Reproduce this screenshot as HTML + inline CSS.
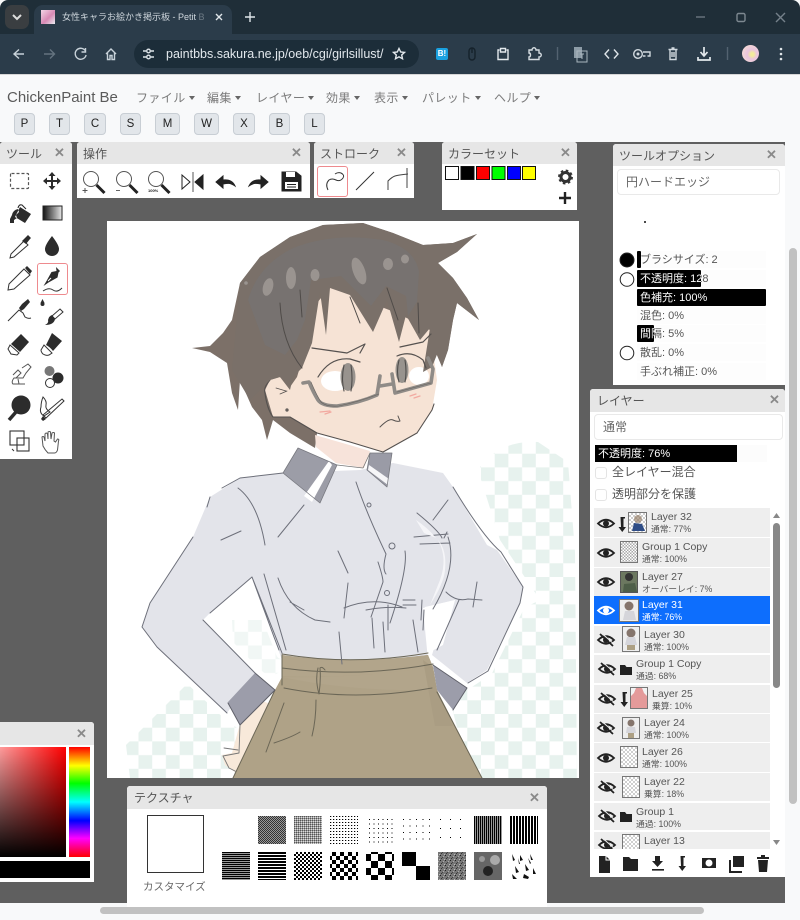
<!DOCTYPE html>
<html lang="ja"><head><meta charset="utf-8"><title>ChickenPaint</title>
<style>
html,body{margin:0;padding:0;width:800px;height:920px;overflow:hidden;background:#f8f9fa}
body{position:relative;font-family:"Liberation Sans","Noto Sans CJK JP",sans-serif;color:#555}
.a,.t{position:absolute}
.t{white-space:nowrap;line-height:1}
svg{position:absolute;left:0;top:0;overflow:visible}
.p{position:absolute;background:#fff;border-radius:3px 3px 0 0}
.h{position:absolute;left:0;right:0;top:0;height:22px;background:#e6e6e6;border-radius:3px 3px 0 0}
.h b{position:absolute;left:6px;top:5px;font-weight:400;font-size:12px;line-height:14px;color:#555;white-space:nowrap}
.m{font-size:12px;color:#7b7b7b;top:92px;letter-spacing:.4px}
.m:after{content:"";display:inline-block;margin-left:3px;vertical-align:2px;border:3.5px solid transparent;border-top:4px solid #666;border-bottom:0}
.k{position:absolute;top:113px;height:20px;background:#e2e6ea;border:1px solid #c8ced4;border-radius:4px;text-align:center;font-size:11.5px;line-height:20px;color:#222}
.x{position:absolute;font-size:13px;font-weight:700;color:#8a8a8a;line-height:14px}
.s{position:absolute;left:637px;width:129px;height:17px;font-size:11px;line-height:19px;color:#555;background:#fdfdfd}
.s i{position:absolute;left:0;top:0;bottom:0;background:#000;overflow:hidden;border-radius:1px;font-style:normal;color:#fff;white-space:nowrap}
.s span{position:absolute;left:3px;white-space:nowrap}
.r{position:absolute;left:594px;width:176px;background:#eee;overflow:hidden}
.n{position:absolute;font-size:10.5px;line-height:11px;color:#555;white-space:nowrap;top:4px}
.u{position:absolute;font-size:8.8px;line-height:10px;color:#555;white-space:nowrap;top:16px}
.c{position:absolute;width:16px;height:20px;border:1px solid #777;background:repeating-conic-gradient(#cfcfcf 0 25%,#fff 0 50%) 0 0/4px 4px;overflow:hidden}
.sel .n,.sel .u{color:#fff}
.cb{position:absolute;left:595px;width:10px;height:10px;border:1px solid #e4e4e4;border-radius:3px;background:#fff}
</style></head><body>

<!-- browser chrome -->
<div class="a" style="left:0;top:0;width:800px;height:34px;background:#1f2e38;border-radius:8px 8px 0 0"></div>
<div class="a" style="left:0;top:34px;width:800px;height:40px;background:#2b3c4a"></div>
<div class="a" style="left:5px;top:5px;width:24px;height:24px;background:#3a3e41;border-radius:7px"></div>
<div class="a" style="left:34px;top:5px;width:198px;height:30px;background:#2b3c4a;border-radius:9px 9px 0 0"></div>
<div class="a" style="left:41px;top:10px;width:14px;height:14px;background:linear-gradient(135deg,#f3d6e6,#d98ab5 55%,#e9ecf0)"></div>
<div class="t" style="left:62px;top:12px;width:142px;overflow:hidden;font-size:9px;color:#ced6dc;line-height:11px">女性キャラお絵かき掲示板 - Petit <span style="opacity:.4">B</span></div>
<div class="a" style="left:134px;top:40px;width:285px;height:28px;background:#1c2d39;border-radius:14px"></div>
<div class="t" style="left:166px;top:48px;font-size:12.5px;color:#e2e8ed">paintbbs.sakura.ne.jp/oeb/cgi/girlsillust/</div>
<div class="a" style="left:436px;top:48px;width:12px;height:12px;background:#1aa1e0;border-radius:2px;color:#fff;font-size:8px;font-weight:700;line-height:12px;text-align:center">B!</div>
<div class="a" style="left:742px;top:45px;width:17px;height:17px;border-radius:50%;background:radial-gradient(circle at 60% 55%,#f1ea9c 0 12%,#e9c4de 35%,#f2d6d6 70%,#d8c8e8)"></div>
<svg width="800" height="920" fill="none" stroke="#c8d2d9" stroke-width="1.4">
<path d="M13 15l4 4 4-4" stroke="#ddd" stroke-width="2"/>
<path d="M216 14l6 6M222 14l-6 6" stroke="#dfe5e9"/>
<path d="M245 17h10M250 12v10" stroke="#dfe5e9"/>
<path d="M696 17h9" stroke="#6b7780"/><rect x="737" y="13.500" width="8" height="8" rx="1.500" stroke="#7d8890"/><path d="M776 13l9 9M785 13l-9 9" stroke="#75818a"/>
<path d="M24 54H14M19 49.500l-5 4.500 5 4.500"/>
<path d="M44 54h10M50 49.500l4.500 4.500-4.500 4.500" stroke="#64737f"/>
<path d="M85.500 51a5.500 5.500 0 1 0 .6 4M85.500 48v4H81.500"/>
<path d="M106 54l5-5 5 5M107.500 53v6.500h2.500v-4h2v4h2.500V53"/>
<path d="M143 51h3M151 51h3M143 57h3M151 57h3" stroke="#dce3e8"/><circle cx="148.500" cy="51" r="1.800" stroke="#dce3e8"/><circle cx="148.500" cy="57" r="1.800" stroke="#dce3e8"/>
<path d="M399 48.500l1.700 3.500 3.800.4-2.800 2.600.8 3.800-3.500-2-3.500 2 .8-3.800-2.800-2.600 3.800-.4z" stroke="#e4e9ed"/>
<path d="M469 51a3 3 0 0 1 6 0v6a3 3 0 0 1-6 0zM472 48v5" stroke="#15222b"/>
<path d="M499.500 50h-1.500v9.500h10V50h-1.500M500.500 48.500h5V52h-5z" stroke="#e4e9ed"/>
<path d="M529 50h3c0-3 4-3 4 0h3v3c3 0 3 4 0 4v2.500h-10v-2.500c2 0 2-4 0-4z" stroke="#d6dde2"/>
<path d="M557.500 47v13M727.500 47v13" stroke="#536270"/>
<rect x="574" y="47" width="8" height="11" fill="#8d9ca7" stroke="none"/><path d="M577 51h10v11h-10z" stroke="#aab6bf" stroke-width="1"/><path d="M580 54h4M582 54v5" stroke="#aab6bf" stroke-width="1"/>
<path d="M609 49.500l-4 4.500 4 4.500M614 49.500l4 4.500-4 4.500" stroke="#dfe5e9"/>
<circle cx="638" cy="54" r="4.300" stroke="#d1d9df"/><circle cx="638" cy="54" r="1.500" fill="#d1d9df" stroke="none"/><path d="M643 52h7v4h-2.500M643 56h2.500" stroke="#d1d9df"/>
<path d="M668.500 49.500h9M670 49.500v10h6v-10M671.500 48h3M672 52v5M674 52v5" stroke="#d1d9df"/>
<path d="M704 47v8M700.500 52l3.500 4 3.500-4M698 57v3h12v-3" stroke="#e4e9ed" stroke-width="1.700"/>
<circle cx="781" cy="49" r="1.300" fill="#dfe5e9" stroke="none"/><circle cx="781" cy="54" r="1.300" fill="#dfe5e9" stroke="none"/><circle cx="781" cy="59" r="1.300" fill="#dfe5e9" stroke="none"/>
</svg>

<!-- page header -->
<div class="a" style="left:0;top:74px;width:800px;height:68px;background:#f8f9fa;border-top:1px solid #d6d6d6;box-sizing:border-box"></div>
<div class="t" style="left:7px;top:90px;font-size:15px;color:#5a5a5a">ChickenPaint Be</div>
<div class="t m" style="left:136px">ファイル</div><div class="t m" style="left:207px">編集</div><div class="t m" style="left:256px">レイヤー</div><div class="t m" style="left:326px">効果</div><div class="t m" style="left:374px">表示</div><div class="t m" style="left:422px">パレット</div><div class="t m" style="left:494px">ヘルプ</div>
<div class="k" style="left:14px;width:19px">P</div><div class="k" style="left:49px;width:19px">T</div><div class="k" style="left:84px;width:20px">C</div><div class="k" style="left:120px;width:19px">S</div><div class="k" style="left:155px;width:23px">M</div><div class="k" style="left:194px;width:23px">W</div><div class="k" style="left:233px;width:20px">X</div><div class="k" style="left:269px;width:19px">B</div><div class="k" style="left:304px;width:19px">L</div>

<!-- workspace -->
<div class="a" style="left:0;top:142px;width:785px;height:761px;background:#5f5f5f"></div>
<div class="a" style="left:107px;top:221px;width:472px;height:557px;background:#fff"></div>

<!-- illustration -->
<svg width="800" height="920" stroke-linejoin="round" stroke-linecap="round">
<defs>
<pattern id="ck" x="481" y="440" width="27.400" height="27.400" patternUnits="userSpaceOnUse"><rect width="13.700" height="13.700" fill="#e7f2ee"/><rect x="13.700" y="13.700" width="13.700" height="13.700" fill="#e7f2ee"/></pattern>
<clipPath id="cv"><rect x="107" y="221" width="472" height="557"/></clipPath>
<filter id="sf" x="0" y="0" width="100%" height="100%"><feGaussianBlur stdDeviation=".35"/></filter>
</defs>
<g clip-path="url(#cv)"><g filter="url(#sf)">
<path d="M478 470q20-30 60-28l30 20 7 90 2 226H470L450 700 500 620 540 600 500 540z" fill="url(#ck)"/>
<path d="M126 745l60-60 50-5 20 98H130z" fill="url(#ck)"/>
<path d="M232 620l40 0 12 50-20 10-30-20z" fill="url(#ck)" opacity=".6"/>
<!-- halo -->
<path d="M283 473L240 478 210 497 193 537 150 603 142 627 157 647 227 713 243 725 275 690 255 673 203 620 210 613 252 577 282 653H428L423 608 438 610 430 650 433 665 467 683 487 670 520 603 523 587 497 550 487 545 453 487 443 473 393 463z" fill="#fff" stroke="#fff" stroke-width="12"/>
<!-- hand -->
<path d="M240 724l18-24 10 3-25 75-18-13-3-10 10-2z" fill="#f8e9da"/>
<path d="M240 725l-1 28-16 3 6 12 10 5M224 748l14 2" fill="none" stroke="#777" stroke-width=".9"/>
<!-- shirt -->
<path d="M283 473L240 478 210 497 193 537 150 603 142 627 157 647 227 713 255 673 203 620 210 613 252 577 282 660H428L423 608 455 600 445 612 432 655 467 683 487 670 520 603 523 587 497 550 487 545 453 487 443 473 393 463 360 470z" fill="#e3e4ea"/>
<path d="M425 607l30-7-12 45-15 8z" fill="#fff"/>
<!-- skirt -->
<path d="M282 655q60 10 146 0l5 12 4 23 45 88H233l42-88 7-13z" fill="#afa287"/>
<path d="M282 655q70 10 146 0l5 12q-80 12-151 9zM282 677q70 15 155 13l-4-23q-80 12-151 10z" fill="#b2a58b"/>
<path d="M423 660l10 7 4 23 16 36-18 0z" fill="#aa9d83"/>
<g fill="none" stroke="#6b6656" stroke-width="1"><path d="M282 654q70 12 146-1M282 668q75 10 151-4M284 688q70 14 148 0M282 655v30M275 690l-42 88M437 692l45 86M318 668q-3 12 1 26 2-14 1-26 2-2 5 2M316 700q0 20-4 36M284 703l-18 49M274 743q18-6 26-11" /></g>
<!-- cuffs -->
<path d="M228 702l27-29 20 17-35 35zM433 665l34 23-14 22-16-20z" fill="#9c9daa"/>
<g fill="none" stroke="#5f6069" stroke-width="1"><path d="M228 703l12 22 35-35-20-17M433 665l34 23-14 22"/></g>
<!-- shirt lines -->
<g fill="none" stroke="#6d6f7a" stroke-width="1"><path d="M283 473L240 478 222 488M210 497l-3 10M193 537l-43 66-8 24 15 20 70 66M203 620l52 53M210 613l42-36 30 76M252 577l22 60 5 13M264 574l22 76"/><path d="M238 488q20 15 27 57M241 531l-20 9M304 505l-26 32"/><path d="M356 482q10 30 30 72-4 15 0 20M378 562q5 15 5 20l-12 35"/><circle cx="369" cy="505" r="2"/><circle cx="392" cy="546" r="3"/><circle cx="387" cy="593" r="2.500"/><path d="M405 551q3 18-15 72M338 551l10 22M348 583l-4 35"/><path d="M278 578q10 30 37 42l15 2M290 602l14 8M344 608q30-12 58-1M366 610q20-4 40-2M403 600h12M403 605h13M388 605v25M372 618l2 30M383 622l2 30M339 632l3 32M413 620l5 32M422 600l-1 20"/><path d="M417 513q22 18 25 25M414 537l34-3M420 544l30-1M448 537q10 30-15 72M447 532l-3 6M448 500l-15 20M453 487q30 50 48 65l22 35-3 16-32 68-20 12M477 582l-4 25M446 592q10 10 22 7l14 1M459 600l-22 50M424 610l-1 20"/></g>
<path d="M438 540q10 18 2 40l-10 25q14-22 15-35 2-20-7-30zM416 520q12 8 20 18l-12-5z" fill="#f5f5f8"/>
<!-- back hair -->
<path d="M192 348L210 346 223 333 232 320 240 283 260 257 290 237 323 225 363 223 393 233 423 245 453 243 477 234 457 252 438 263 453 278 467 298 479 320 457 303 453 320 448 350 442 367 436 353 420 370 380 420 317 433 315 448 290 433 273 420 267 440 262 420 252 407 240 380 238 410 232 393 227 363 210 352z" fill="#7b6f68"/>
<!-- neck -->
<path d="M315 435l55 16-6 17-28-5-20-16z" fill="#f7e3da"/>
<!-- collar -->
<path d="M298 448l39 17-17 38-37-30z" fill="#9c9da7"/>
<path d="M329 461l-25 35 8 6 20-37z" fill="#fff"/>
<path d="M370 453h22l-5 34-20-17z" fill="#9a9ba6"/><path d="M369 465l20 14-1 6-20-15z" fill="#f6f6f8"/>
<path d="M298 448l39 17-17 38-37-30zM370 453h22l-5 34-20-17z" fill="none" stroke="#77787f" stroke-width=".8"/>
<path d="M337 465l26 3 7-15" fill="none" stroke="#777" stroke-width=".8"/>
<!-- face -->
<path d="M300 367L303 320 330 287 397 313 430 330 437 380 432 410 417 433 383 452 350 442 317 433 290 417 273 417 265 390 270 380 280 377 290 387 297 377z" fill="#f6e3d5"/>
<path d="M270 380q-7 8-5 13 2 16 8 24h17l27 16 33 9 33 10 34-19 15-23 2-6" fill="none" stroke="#55514f" stroke-width="1.100"/>
<!-- eye whites -->
<ellipse cx="335" cy="381" rx="14" ry="10" fill="#fff"/><ellipse cx="419" cy="376" rx="10" ry="9" fill="#fff"/>
<!-- front hair -->
<path d="M240 283L260 257 290 237 323 225 363 223 393 233 423 245 453 243 477 234 457 252 438 263 453 278 467 298 479 320 457 303 453 320 448 350 442 367 438 352 432 367 423 372 430 328 420 340 406 315 399 342 387 300 373 332 350 295 330 288 326 335 320 292 312 343 302 368 293 377 290 390 280 377 270 380 250 400 232 370z" fill="#7a7069"/>
<path d="M248 300q10-35 45-52 40-16 90-8 32 8 36 32l-2 30-9 14-2-20-20-10-15 20-30-30-30 4-6 40-8 20-12 15-20-10z" fill="#77726f"/>
<g fill="#9a9490"><ellipse cx="268" cy="287" rx="5" ry="9" transform="rotate(15 268 287)"/><ellipse cx="291" cy="278" rx="5" ry="11"/><ellipse cx="315" cy="275" rx="4.500" ry="6"/><ellipse cx="359" cy="271" rx="6" ry="14" transform="rotate(-20 359 271)"/><ellipse cx="388" cy="264" rx="5" ry="6"/><ellipse cx="405" cy="259" rx="4" ry="4.500"/><circle cx="246" cy="283" r="1.800"/></g>
<g fill="none" stroke="#4f4b48" stroke-width="1"><path d="M280 303q2 40 22 65M300 290l2 27M350 297l10 26M387 288l11 32M418 303l1 30"/></g>
<!-- eyes -->
<ellipse cx="348" cy="377" rx="7.500" ry="14" fill="#98938e"/><ellipse cx="402" cy="370" rx="6.500" ry="13" fill="#98938e"/>
<g fill="none" stroke="#4f4d4c" stroke-width="1.100"><path d="M344 365q-3 14 0 26M351 365q2 14 0 26M399 360q-3 12 0 22M405 360q2 12 0 22"/></g>
<g fill="none" stroke="#55514f" stroke-width="1.200"><path d="M312 348l35 5 18-9-5 9M400 347l23-5 8-8"/><path d="M318 377q12-20 32-18l10 3M397 356q14-6 26 4l3 8"/><path d="M380 427q9-9 13-7 4 2 7 1l-2-5" stroke-width="1"/><path d="M276 388l10 3M280 394l7-3" stroke-width=".8"/><circle cx="287" cy="410" r="1"/></g>
<!-- glasses -->
<g fill="none" stroke="#8f8b87" stroke-width="3.600"><path d="M303 383l6-1q4 10 9 18 4 6 19 6 22-3 40-11l3-19"/><path d="M380 386l12-2M392 374l3 19 36-10 2-14-5-11"/></g>
<g fill="none" stroke="#66625f" stroke-width=".6"><path d="M311 382q6 14 10 20 5 5 18 4 22-5 40-12M397 392l34-9"/></g>
<path d="M320 412l10-1M325 414l6-2M410 396l6-2M414 398l6-2" stroke="#f2a9a0" stroke-width="1.200" fill="none"/>
</g></g>
</svg>

<!-- right page scrollbar + bottom -->
<div class="a" style="left:789px;top:248px;width:8px;height:556px;background:#c1c1c1;border-radius:4px"></div>
<div class="a" style="left:100px;top:907px;width:604px;height:7px;background:#c1c1c1;border-radius:4px"></div>

<!-- Tools panel -->
<div class="p" style="left:0;top:142px;width:72px;height:317px"><div class="h"><b>ツール</b></div></div>
<div class="x" style="left:54px;top:146px">✕</div>
<div class="a" style="left:37px;top:263px;width:29px;height:30px;border:1px solid #ee8a8e;border-radius:3px"></div>
<svg width="800" height="920" fill="#2c2c2c" stroke="none">
<rect x="10.500" y="173.500" width="18" height="15" rx="1" fill="none" stroke="#555" stroke-width="1.200" stroke-dasharray="3 2"/>
<path d="M52 172l3.500 4h-2.500v4h4v-2.500l4 3.500-4 3.500V182h-4v4h2.500L52 190l-3.500-4H51v-4h-4v2.500L43 181l4-3.500V180h4v-4h-2.500z"/>
<path d="M20 207l11 7-6 9-10-6zM18 209q-5 1-6 6l-2 4v4h4v-3l3-2-1-3 3-3z"/><path d="M18 208q1-4 4-3l4 4" fill="none" stroke="#2c2c2c" stroke-width="1.100"/>
<defs><linearGradient id="gr"><stop offset="0" stop-color="#111"/><stop offset="1" stop-color="#e8e8e8"/></linearGradient></defs>
<rect x="43" y="206" width="19" height="14" fill="url(#gr)" stroke="#222"/>
<path d="M24 241l4 4-14 12-4 1 1-4z" fill="#fff" stroke="#333" stroke-width="1"/><path d="M22 241l5-5 1-1 3 3-1 1-4 5z"/>
<path d="M52 236q7 9 7 13a7 7 0 0 1-14 0q0-4 7-13z"/>
<path d="M24 269l6 6-16 14-6 1 1-6z" fill="#fff" stroke="#333" stroke-width="1"/><path d="M25 268l2-2 5 5-2 3z"/>
<path d="M56 267l4 4-1.500 1.500-1 5-9 5-5 3.500 3-5 5-9 5-1z"/><path d="M48 281l3-3" stroke="#fff" fill="none"/><path d="M43 291q6-4 10-1t9-2" fill="none" stroke="#333" stroke-width="1"/>
<path d="M8 321l11-11 4 3 2 4q3 2 6 1" fill="none" stroke="#333" stroke-width="1"/><path d="M22 304l6-5 2 3-6 7-3 2-2-3z"/>
<circle cx="42.500" cy="304" r="2"/><path d="M42.500 299l2 4h-4z"/><path d="M60 309l3 3-8 7-3-3z" fill="#fff" stroke="#333"/><path d="M52 315l3 4q-1 6-10 6 4-2 3-5 1-4 4-5z"/>
<path d="M21 334l8 8-9 10-9-8z"/><path d="M10 345l9 8-2 2-6-1-3-5z" fill="#fff" stroke="#333"/>
<path d="M52 333l10 8-9 10q-3-4-7-6z"/><path d="M44 345l8 8-3 2q-3 1-6-1-2-2-2-4z" fill="#fff" stroke="#333"/>
<path d="M22 368l6-4 3 3-5 6-3 5-9 0q-3 4-1 6h12M13 375l5-5 3 3-5 5M18 379l1 5" fill="none" stroke="#555" stroke-width="1"/>
<circle cx="49.500" cy="371" r="5" fill="#777"/><circle cx="58" cy="378" r="5.500"/><circle cx="50" cy="383" r="4.500" fill="#fff" stroke="#333"/>
<circle cx="21" cy="405" r="9.500"/><path d="M16 412l-7 8" stroke="#2c2c2c" stroke-width="3.500"/>
<path d="M62 399l2 2-18 17-3-3z" fill="#fff" stroke="#333"/><path d="M43 416l3 3-3 2-2-2z"/><path d="M43 397q4 4 3 8t4 7l-6 4q-5-3-3-9 0-5 2-10z" fill="none" stroke="#333"/>
<rect x="10" y="431" width="14" height="14" fill="none" stroke="#333" stroke-width="1.100"/><rect x="17" y="438" width="12" height="13" fill="none" stroke="#333" stroke-width="1.100"/><path d="M12 449l2 2" stroke="#333"/>
<path d="M48 453q-3-3-5-7l-1-9q1-1 2 0l1 4v-7q1-2 2.500 0l.5 5v-7q1.500-1 2.500 0l.5 7 1-6q1.500-1 2.500 0l-.5 8 1.500 1 2-3q2 0 1 2l-1 9q-1 3-3 3z" fill="#fff" stroke="#555"/>
</svg>

<!-- Ops panel -->
<div class="p" style="left:77px;top:142px;width:233px;height:56px"><div class="h"><b>操作</b></div></div>
<div class="x" style="left:291px;top:146px">✕</div>
<div class="t" style="left:148px;top:189px;font-size:4px;font-weight:700;color:#222">100%</div>
<svg width="800" height="920" fill="none" stroke="#555" stroke-width="1">
<circle cx="91" cy="179" r="7.500"/><path d="M96.500 185l8 8" stroke="#222" stroke-width="3"/>
<path d="M85 188v5M82.500 190.500h5"/>
<circle cx="124" cy="179" r="7.500"/><path d="M129.500 185l8 8" stroke="#222" stroke-width="3"/><path d="M116 190.500h4" stroke="#666"/>
<circle cx="156" cy="179" r="7.500"/><path d="M161.500 185l8 8" stroke="#222" stroke-width="3"/>
<path d="M193 172v20" stroke="#555"/><path d="M182 175l8 7-8 7z" stroke="#222"/><path d="M203 175l-8 7 8 7z" fill="#222" stroke="#222"/>
<path d="M216 182l7-6v4q9-1 12 6-3-2-5-2.500t-7 .5v4z" fill="#222" stroke="#222"/>
<path d="M268 182l-7-6v4q-9-1-12 6 3-2 5-2.500t7 .5v4z" fill="#222" stroke="#222"/>
<path d="M282 172h14l5 4v15h-19z" fill="#222" stroke="#222"/><rect x="286" y="172" width="9" height="5" fill="#fff" stroke="none"/><rect x="285" y="182" width="13" height="7" fill="#fff" stroke="none"/><path d="M287 184.500h9M287 187h9" stroke="#222"/>
</svg>

<!-- Stroke panel -->
<div class="p" style="left:314px;top:142px;width:100px;height:56px"><div class="h"><b>ストローク</b></div></div>
<div class="x" style="left:396px;top:146px">✕</div>
<div class="a" style="left:317px;top:166px;width:29px;height:29px;border:1px solid #ee8a8e;border-radius:3px"></div>
<svg width="800" height="920" fill="none" stroke="#333" stroke-width="1">
<path d="M328 190q-3-6 1-10 3-2 7 0t7-2q2-3-2-5-3-1-6 1"/>
<path d="M356 190l18-18"/>
<path d="M388 190v-9q4-4 7-5t13-2M407 168v20" stroke="#444"/>
</svg>

<!-- Color set -->
<div class="p" style="left:442px;top:142px;width:135px;height:68px"><div class="h"><b>カラーセット</b></div></div>
<div class="x" style="left:560px;top:146px">✕</div>
<svg width="800" height="920" stroke="#111" stroke-width="1">
<rect x="445.500" y="166.500" width="13" height="13" fill="#fff"/><rect x="461" y="166.500" width="13" height="13" fill="#000"/><rect x="476.500" y="166.500" width="13" height="13" fill="#f00"/><rect x="492" y="166.500" width="13" height="13" fill="#0f0"/><rect x="507.500" y="166.500" width="13" height="13" fill="#00f"/><rect x="522.500" y="166.500" width="13" height="13" fill="#ff0"/>
<circle cx="565.500" cy="177" r="4.500" fill="none" stroke="#333" stroke-width="3"/><circle cx="565.500" cy="177" r="6.300" fill="none" stroke="#333" stroke-width="2.300" stroke-dasharray="2.500 2.450"/>
<path d="M565 192v12M559 198h12" stroke="#222" stroke-width="2.400"/>
</svg>

<!-- Tool options -->
<div class="p" style="left:613px;top:144px;width:172px;height:241px"><div class="h"><b>ツールオプション</b></div></div>
<div class="x" style="left:766px;top:148px">✕</div>
<div class="a" style="left:617px;top:169px;width:161px;height:24px;border:1px solid #e9e9e9;border-radius:4px;background:#fff;font-size:12px;line-height:25px;color:#666;text-indent:8px">円ハードエッジ</div>
<div class="a" style="left:644px;top:221px;width:2px;height:2px;background:#111;border-radius:50%"></div>
<div class="s" style="top:251px"><span>ブラシサイズ: 2</span><i style="width:4px"><span>ブラシサイズ: 2</span></i></div>
<div class="s" style="top:270px"><span>不透明度: 128</span><i style="width:64px"><span>不透明度: 128</span></i></div>
<div class="s" style="top:289px"><i style="width:129px"><span>色補充: 100%</span></i></div>
<div class="s" style="top:307px"><span>混色: 0%</span></div>
<div class="s" style="top:325px"><span>間隔: 5%</span><i style="width:17px"><span>間隔: 5%</span></i></div>
<div class="s" style="top:344px"><span>散乱: 0%</span></div>
<div class="s" style="top:363px"><span>手ぶれ補正: 0%</span></div>
<svg width="800" height="920" fill="none" stroke="#222" stroke-width="1">
<circle cx="627" cy="260" r="7" fill="#000"/><circle cx="627" cy="279.500" r="6.800"/><circle cx="627" cy="353" r="6.800"/>
</svg>

<!-- Layers -->
<div class="p" style="left:590px;top:389px;width:195px;height:488px"><div class="h" style="height:23px"><b style="left:7px;top:5px">レイヤー</b></div></div>
<div class="x" style="left:769px;top:393px">✕</div>
<div class="a" style="left:594px;top:414px;width:187px;height:24px;border:1px solid #e9e9e9;border-radius:4px;background:#fff;font-size:12px;line-height:25px;color:#666;text-indent:8px">通常</div>
<div class="a" style="left:595px;top:445px;width:172px;height:17px;background:#fcfcfc;font-size:11px;line-height:18px"><div class="a" style="left:0;top:0;width:142px;height:17px;background:#000;color:#fff;text-indent:3px;white-space:nowrap">不透明度: 76%</div></div>
<div class="cb" style="top:467px"></div><div class="t" style="left:612px;top:466px;font-size:12px;color:#555">全レイヤー混合</div>
<div class="cb" style="top:489px"></div><div class="t" style="left:612px;top:488px;font-size:12px;color:#555">透明部分を保護</div>

<div class="a" style="left:590px;top:505px;width:190px;height:344px;overflow:hidden">
<div class="a" style="left:-590px;top:-505px;width:800px;height:920px">
<div class="r" style="top:508px;height:29px"><div class="c" style="left:34px;top:4px;width:17px;height:19px"><svg width="18" height="20" stroke="none"><circle cx="9" cy="6" r="4" fill="#8a6f55" opacity=".6"/><path d="M3 18l2-8 8 1 3 7z" fill="#2f4d86"/></svg></div><div class="n" style="left:57px">Layer 32</div><div class="u" style="left:57px">通常: 77%</div></div>
<div class="r" style="top:538px;height:29px"><div class="c" style="left:26px;top:3px;background:repeating-conic-gradient(#aaa 0 25%,#fff 0 50%) 0 0/3px 3px"></div><div class="n" style="left:48px">Group 1 Copy</div><div class="u" style="left:48px">通常: 100%</div></div>
<div class="r" style="top:568px;height:28px"><div class="c" style="left:26px;top:3px;border-color:#555;background:#6c7860"><svg width="16" height="20" stroke="none"><circle cx="8" cy="5" r="4" fill="#333"/><path d="M2 20l1-8 11-1 2 9z" fill="#4e5e48"/></svg></div><div class="n" style="left:48px">Layer 27</div><div class="u" style="left:48px">オーバーレイ: 7%</div></div>
<div class="r sel" style="top:596px;height:28px;background:#0d6efd"><div class="c" style="left:25px;top:3px;height:21px;width:18px;background:#eee"><svg width="18" height="22" stroke="none"><circle cx="9" cy="6" r="4.500" fill="#85756c"/><path d="M3 20l2-9h9l2 9z" fill="#d5d5da"/></svg></div><div class="n" style="left:48px">Layer 31</div><div class="u" style="left:48px">通常: 76%</div></div>
<div class="r" style="top:626px;height:27px"><div class="c" style="left:28px;top:0;height:24px;background:#eee"><svg width="16" height="24" stroke="none"><circle cx="8" cy="6" r="4.500" fill="#85756c"/><path d="M2 18l2-8h8l2 8z" fill="#d5d5da"/><rect x="4" y="18" width="8" height="5" fill="#ada084"/></svg></div><div class="n" style="left:50px">Layer 30</div><div class="u" style="left:50px">通常: 100%</div></div>
<div class="r" style="top:655px;height:28px"><div class="n" style="left:42px">Group 1 Copy</div><div class="u" style="left:42px">通過: 68%</div></div>
<div class="r" style="top:685px;height:28px"><div class="c" style="left:36px;top:2px;background:#e49a9a"><svg width="16" height="20" stroke="none"><path d="M0 0h5l-2 5-3 3zM16 0h-5l2 5 3 3z" fill="#f2f2f2"/></svg></div><div class="n" style="left:58px">Layer 25</div><div class="u" style="left:58px">乗算: 10%</div></div>
<div class="r" style="top:714px;height:28px"><div class="c" style="left:28px;top:3px;background:#eee"><svg width="16" height="20" stroke="none"><circle cx="8" cy="5" r="3.500" fill="#85756c"/><path d="M3 15l1-6h8l1 6z" fill="#d5d5da"/><rect x="5" y="15" width="6" height="5" fill="#ada084"/></svg></div><div class="n" style="left:50px">Layer 24</div><div class="u" style="left:50px">通常: 100%</div></div>
<div class="r" style="top:743px;height:29px"><div class="c" style="left:26px;top:3px"></div><div class="n" style="left:48px">Layer 26</div><div class="u" style="left:48px">通常: 100%</div></div>
<div class="r" style="top:773px;height:28px"><div class="c" style="left:28px;top:3px"></div><div class="n" style="left:50px">Layer 22</div><div class="u" style="left:50px">乗算: 18%</div></div>
<div class="r" style="top:803px;height:27px"><div class="n" style="left:42px">Group 1</div><div class="u" style="left:42px">通過: 100%</div></div>
<div class="r" style="top:832px;height:28px"><div class="c" style="left:28px;top:2px"></div><div class="n" style="left:50px">Layer 13</div><div class="u" style="left:50px">通過: 100%</div></div>
</div></div>

<svg width="800" height="920">
<defs>
<g id="eo"><path d="M-8 0q8-7.500 16 0-8 7.500-16 0z" fill="none" stroke="currentColor" stroke-width="1.800"/><circle r="3" fill="currentColor"/></g>
<g id="ec"><use href="#eo"/><path d="M-6-6L7 6" stroke="currentColor" stroke-width="1.800"/><path d="M-4-6.500L9 5" stroke="#eee" stroke-width="1"/></g>
<path id="fd" d="M0 1h5l1.500 2H12v8H0z"/>
<path id="ar" d="M-2.500-7H2v1.500H.5V3H3L-.75 8-4.500 3H-2z"/>
</defs>
<g color="#222">
<use href="#eo" x="606" y="523.500"/><use href="#eo" x="606" y="553"/><use href="#eo" x="606" y="582"/>
<g color="#fff"><use href="#eo" x="606" y="610.500"/></g>
<use href="#ec" x="606" y="640"/><use href="#ec" x="607" y="669"/><use href="#ec" x="607" y="699"/><use href="#ec" x="606" y="728"/><use href="#eo" x="606" y="758"/><use href="#ec" x="607" y="787"/><use href="#ec" x="607" y="816"/><use href="#ec" x="607" y="845"/>
</g>
<rect x="590" y="849" width="195" height="28" fill="#fff"/>
<g fill="#222">
<use href="#fd" x="620" y="664"/><use href="#fd" x="620" y="811"/>
<use href="#ar" x="623" y="524"/><use href="#ar" x="625" y="699"/>
<rect x="773" y="523" width="7" height="165" rx="3.500" fill="#888"/>
<path d="M773 518l3.500-5 3.500 5z" fill="#888"/><path d="M773 840l3.500 5 3.500-5z" fill="#888"/>
<path d="M599 856h7l4 4v13h-11z"/><path d="M606 856v4h4" fill="none" stroke="#fff"/>
<path d="M623 857h6l2 2h7v12h-15z"/>
<path d="M655 856h5v5h3l-5.500 6-5.500-6h3zM652 869h12v1.600h-12z"/>
<use href="#ar" x="683" y="863"/>
<path d="M702 858h14v10h-14z"/><circle cx="709" cy="863" r="3.500" fill="#fff"/>
<path d="M733 856h11v11h-11z"/><path d="M729 860h2v11h11v2h-13z"/>
<path d="M757 857h12v2h-12zM761 855h4v2h-4zM758 860h10l-1 12h-8z"/>
</g>
</svg>

<!-- Texture -->
<div class="p" style="left:127px;top:786px;width:420px;height:121px"><div class="h" style="height:23px"><b style="left:7px;top:5px">テクスチャ</b></div></div>
<div class="x" style="left:529px;top:791px">✕</div>
<div class="a" style="left:147px;top:815px;width:55px;height:56px;border:1px solid #333;background:#fff"></div>
<div class="t" style="left:143px;top:882px;font-size:10.5px;color:#666">カスタマイズ</div>
<svg width="800" height="920" shape-rendering="crispEdges">
<defs>
<pattern id="p1" width="2" height="2" patternUnits="userSpaceOnUse"><rect width="2" height="2" fill="#999"/><rect width="1" height="1" fill="#333"/><rect x="1" y="1" width="1" height="1" fill="#333"/></pattern>
<pattern id="p2" width="2" height="2" patternUnits="userSpaceOnUse"><rect width="2" height="2" fill="#ddd"/><rect width="2" height="1" fill="#999"/><rect width="1" height="2" fill="#999"/><rect width="1" height="1" fill="#555"/></pattern>
<pattern id="p3" width="3" height="3" patternUnits="userSpaceOnUse"><rect width="1" height="1"/><rect x="1" width="1" height="1" fill="#bbb"/></pattern>
<pattern id="p4" width="4.500" height="4.500" patternUnits="userSpaceOnUse"><rect width="1" height="1"/></pattern>
<pattern id="p5" width="6.500" height="6.500" patternUnits="userSpaceOnUse"><rect width="1" height="1"/></pattern>
<pattern id="p6" width="10" height="9" patternUnits="userSpaceOnUse"><rect width="1" height="1"/></pattern>
<pattern id="p7" width="2" height="2" patternUnits="userSpaceOnUse"><rect width="1" height="2"/><rect x="1" width="1" height="2" fill="#999"/></pattern>
<pattern id="p8" width="3" height="3" patternUnits="userSpaceOnUse"><rect width="2" height="3"/></pattern>
<pattern id="p9" width="2" height="2" patternUnits="userSpaceOnUse"><rect width="2" height="1"/><rect y="1" width="2" height="1" fill="#999"/></pattern>
<pattern id="p10" width="3" height="3" patternUnits="userSpaceOnUse"><rect width="3" height="2"/></pattern>
<pattern id="p11" width="4" height="4" patternUnits="userSpaceOnUse"><rect width="2" height="2"/><rect x="2" y="2" width="2" height="2"/></pattern>
<pattern id="p12" width="8" height="8" patternUnits="userSpaceOnUse"><rect width="4" height="4"/><rect x="4" y="4" width="4" height="4"/></pattern>
<pattern id="p13" width="14" height="14" patternUnits="userSpaceOnUse"><rect x="0" width="7" height="7"/><rect x="7" y="7" width="7" height="7"/></pattern>
<pattern id="p15" width="5" height="5" patternUnits="userSpaceOnUse"><rect width="5" height="5" fill="#777"/><rect width="1" height="1" fill="#222"/><rect x="3" y="1" width="1" height="1" fill="#aaa"/><rect x="1" y="3" width="1" height="1" fill="#333"/><rect x="4" y="4" width="1" height="1" fill="#bbb"/><rect x="2" y="2" width="1" height="1" fill="#444"/></pattern>
</defs>
<g fill="#000">
<rect x="258" y="816" width="28" height="28" fill="url(#p1)"/>
<rect x="294" y="816" width="28" height="28" fill="url(#p2)"/>
<rect x="330" y="816" width="28" height="28" fill="url(#p3)"/>
<rect x="366" y="816" width="28" height="28" fill="url(#p4)"/>
<rect x="402" y="816" width="28" height="28" fill="url(#p5)"/>
<rect x="438" y="816" width="28" height="28" fill="url(#p6)"/>
<rect x="474" y="816" width="28" height="28" fill="url(#p7)"/>
<rect x="510" y="816" width="28" height="28" fill="url(#p8)"/>
<rect x="222" y="852" width="28" height="28" fill="url(#p9)"/>
<rect x="258" y="852" width="28" height="28" fill="url(#p10)"/>
<rect x="294" y="852" width="28" height="28" fill="url(#p11)"/>
<rect x="330" y="852" width="28" height="28" fill="url(#p12)"/>
<rect x="366" y="852" width="28" height="28" fill="url(#p13)"/>
<rect x="402" y="852" width="14" height="14"/><rect x="416" y="866" width="14" height="14"/>
<rect x="438" y="852" width="28" height="28" fill="url(#p15)"/>
<rect x="474" y="852" width="28" height="28" fill="#666"/>
</g>
<g shape-rendering="auto"><circle cx="488" cy="871" r="5" fill="#222" filter="url(#sf)"/><circle cx="495" cy="860" r="5" fill="#aaa"/><circle cx="482" cy="859" r="3" fill="#999"/></g>
<g fill="#111" shape-rendering="auto"><path d="M512 854l3 6-2 1zM520 855l3 5-3 1zM530 854l3 6-2 0zM515 866l4 6-3 1zM525 864l4 6-3 1zM533 868l3 6-3 0zM512 874l5 5-4 0zM524 874l5 3-1 2-5-1zM518 858l2 6-1 0zM528 858l3 5-1 1z"/></g>
</svg>

<!-- Colour picker -->
<div class="p" style="left:0;top:722px;width:94px;height:160px;border-radius:0 3px 0 0"><div class="h" style="height:23px;border-radius:0 3px 0 0"></div>
<div class="a" style="left:0;top:25px;width:66px;height:110px;background:linear-gradient(to bottom,rgba(0,0,0,0),#000),linear-gradient(to right,#ff9c9c,#f00)"></div>
<div class="a" style="left:69px;top:25px;width:21px;height:110px;background:linear-gradient(to bottom,#f00,#ff0 17%,#0f0 33%,#0ff 50%,#00f 67%,#f0f 83%,#f00)"></div>
<div class="a" style="left:0;top:139px;width:90px;height:17px;background:#000"></div>
</div>
<div class="x" style="left:76px;top:727px">✕</div>
</body></html>
